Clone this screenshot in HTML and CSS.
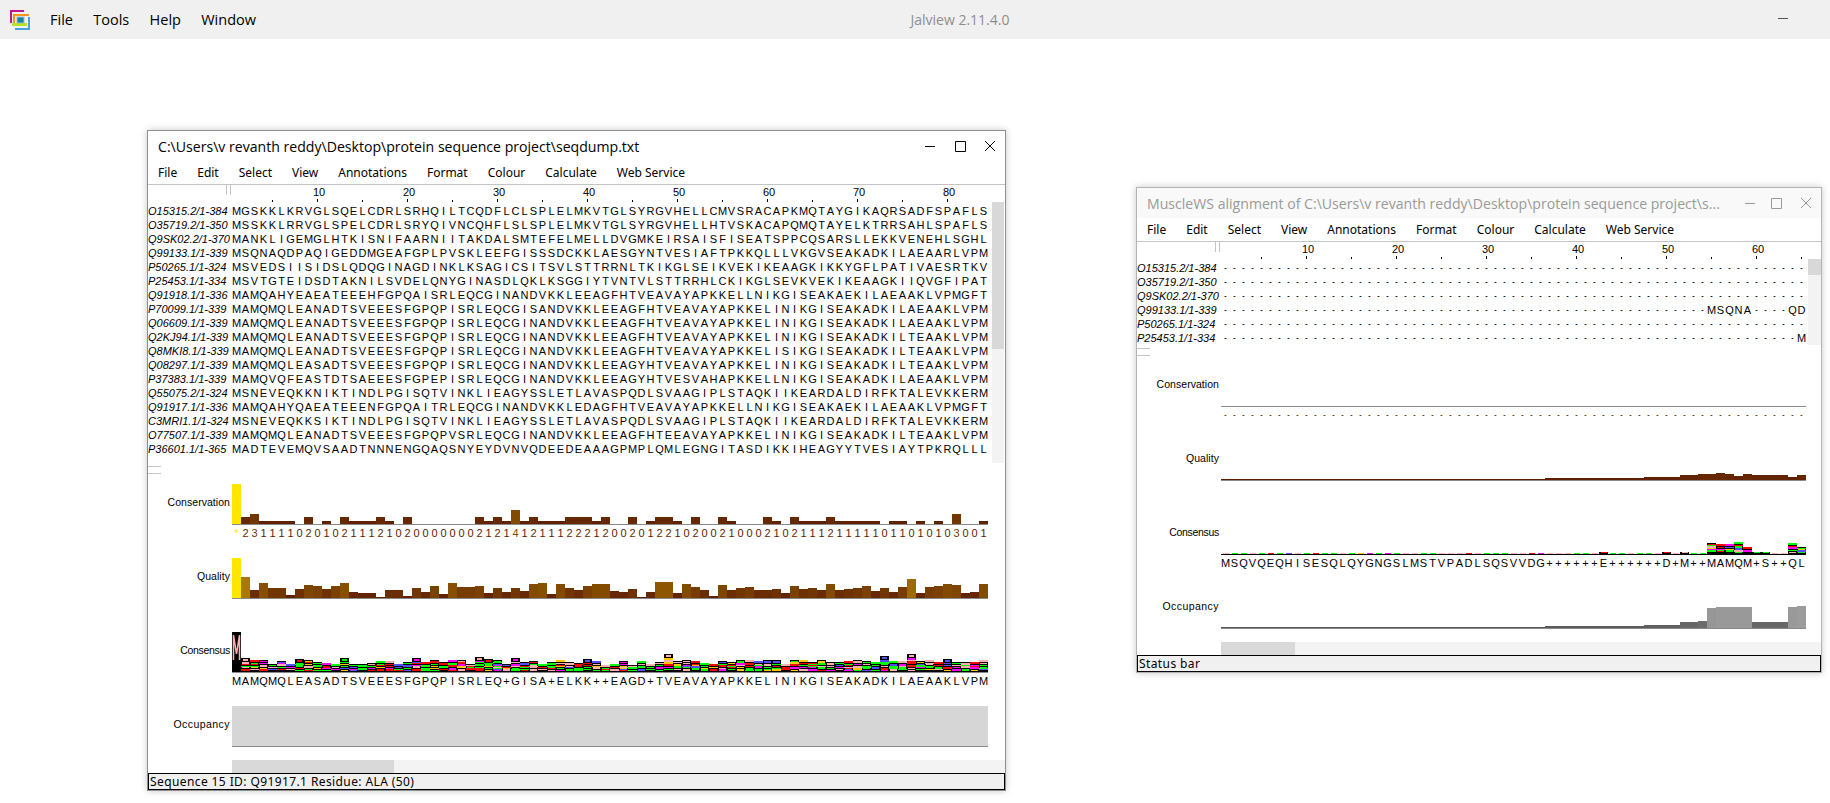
FILE: index.html
```html
<!DOCTYPE html>
<html lang="en">
<head>
<meta charset="utf-8">
<title>Jalview 2.11.4.0</title>
<link rel="stylesheet" href="styles.css">
</head>
<body>
<header class="appbar">
  <svg class="app-logo" width="20" height="20" viewBox="10 9 20 20" aria-hidden="true">
    <rect x="10" y="9" width="14" height="2" fill="#c2168f"/>
    <rect x="10" y="9" width="2" height="13" fill="#c2168f"/>
    <rect x="13" y="13" width="16" height="2" fill="#f7941d"/>
    <rect x="13" y="13" width="2" height="10" fill="#f7941d"/>
    <rect x="12" y="22" width="15" height="3" fill="#b5e61d"/>
    <rect x="28" y="16" width="2" height="13" fill="#4ba3d3"/>
    <rect x="15" y="27" width="15" height="2" fill="#4ba3d3"/>
    <rect x="17" y="16" width="7" height="6" fill="#0f8aa6" stroke="#a9b7bd"/>
  </svg>
  <nav class="app-menu"><span>File</span><span>Tools</span><span>Help</span><span>Window</span></nav>
  <div class="app-title">Jalview 2.11.4.0</div>
  <svg class="app-min" width="10" height="1" aria-hidden="true"><rect width="10" height="1" fill="#555"/></svg>
</header>

<section class="win win-main" id="w1">
  <div class="titlebar">
    <div class="wintitle">C:\Users\v revanth reddy\Desktop\protein sequence project\seqdump.txt</div>
    <svg class="controls" width="70" height="12" viewBox="0 0 70 12" aria-hidden="true">
      <path d="M0 6.500H10M30.500 1.500H40.500V11.500H30.500ZM60 1L70 11M70 1L60 11" fill="none" stroke="currentColor"/>
    </svg>
  </div>
  <nav class="menubar"><span>File</span><span>Edit</span><span>Select</span><span>View</span><span>Annotations</span><span>Format</span><span>Colour</span><span>Calculate</span><span>Web Service</span></nav>
  <div class="ruler-row"><div class="side"><i class="grip"></i></div><div class="ruler"></div></div>
  <div class="seqpanel">
    <div class="rows"></div>
    <div class="vscroll"><div class="vthumb"></div></div>
  </div>
  <div class="sash"></div>
  <div class="annots"></div>
  <div class="hscroll-row"><div class="hscroll"><div class="hthumb"></div></div></div>
  <div class="status">Sequence 15 ID: Q91917.1 Residue: ALA (50)</div>
</section>

<section class="win win-muscle" id="w2">
  <div class="titlebar">
    <div class="wintitle">MuscleWS alignment of C:\Users\v revanth reddy\Desktop\protein sequence project\s...</div>
    <svg class="controls" width="70" height="12" viewBox="0 0 70 12" aria-hidden="true">
      <path d="M4 6.500H14M30.500 1.500H40.500V11.500H30.500ZM60 1L70 11M70 1L60 11" fill="none" stroke="currentColor"/>
    </svg>
  </div>
  <nav class="menubar"><span>File</span><span>Edit</span><span>Select</span><span>View</span><span>Annotations</span><span>Format</span><span>Colour</span><span>Calculate</span><span>Web Service</span></nav>
  <div class="ruler-row"><div class="side"><i class="grip"></i></div><div class="ruler"></div></div>
  <div class="seqpanel">
    <div class="rows"></div>
    <div class="vscroll"><div class="vthumb"></div></div>
  </div>
  <div class="sash"></div>
  <div class="annots"></div>
  <div class="hscroll-row"><div class="hscroll"><div class="hthumb"></div></div></div>
  <div class="status">Status bar</div>
</section>
<script src="script.js"></script>
</body>
</html>
```
FILE: styles.css
```css
* { box-sizing: border-box; }
html, body { margin: 0; height: 100%; overflow: hidden; background: #fff; }
body { font-family: "Noto Sans", "Liberation Sans", sans-serif; color: #000; }

.appbar { height: 39px; background: #f0f0f0; display: flex; align-items: center; padding-left: 10px; position: relative; }
.app-logo { display: block; }
.app-menu { display: flex; gap: 20.3px; margin-left: 20px; font-family: "Open Sans", sans-serif; font-size: 14.5px; }
.app-title { position: absolute; left: 90px; right: 0; text-align: center; font-family: "Open Sans", sans-serif; font-size: 14px; color: #8e8e8e; }
.app-min { position: absolute; left: 1778px; top: 18px; }

.win { position: absolute; display: flex; flex-direction: column; background: #fff; border: 1px solid #8f8f8f; box-shadow: 0 0 7px rgba(0, 0, 0, .22); }
.win-main { left: 147px; top: 130px; width: 859px; height: 661px; }
.win-muscle { left: 1136px; top: 187px; width: 686px; height: 486px; border-color: #b4b4b4; }

.titlebar { height: 30px; flex: none; display: flex; align-items: center; justify-content: space-between; padding: 0 10px; }
.wintitle { font-family: "Open Sans", sans-serif; font-size: 14.1px; white-space: nowrap; }
.win-muscle .titlebar { background: #f9f9f9; color: #9a9a9a; }
.controls { flex: none; display: block; }

.menubar { height: 24px; flex: none; display: flex; gap: 20px; align-items: center; padding: 0 10px; border-bottom: 1px solid #c4c4c4; font-size: 12px; }

.ruler-row { height: 17px; flex: none; display: flex; }
.side { width: 84px; flex: none; position: relative; }
.grip { position: absolute; left: 78px; top: 0; width: 5px; height: 10px; border: solid #c4c4c4; border-width: 0 1px; }
.ruler { display: flex; font: 11px "Liberation Sans", sans-serif; }
.tick { width: 9px; height: 17px; display: flex; flex-direction: column; align-items: center; justify-content: flex-end; }
.tick b { font-weight: 400; line-height: 12px; white-space: nowrap; margin: 0 0 1px 3px; }
.tick i { width: 1px; height: 2px; background: #000; }
.tick.major i { height: 3px; }

.seqpanel { flex: none; display: flex; }
.win-main .seqpanel { height: 261px; }
.win-muscle .seqpanel { height: 86px; }
.rows { padding-top: 2px; flex: none; }
.row { display: flex; height: 14px; }
.name { width: 84px; flex: none; font: italic 11px/14px "Liberation Sans", sans-serif; white-space: nowrap; overflow: hidden; }
.cell { width: 9px; flex: none; text-align: center; font: 11px/14px "Liberation Sans", sans-serif; }
.cell.gap { font-size: 7px; font-weight: 700; }

.vscroll { background: #f3f3f3; flex: none; }
.win-main .vscroll { width: 12px; margin-left: 4px; }
.win-muscle .vscroll { width: 13px; margin-left: 2px; }
.vthumb { background: #d8d8d8; }
.win-main .vthumb { height: 147px; }
.win-muscle .vthumb { height: 16px; }

.sash { height: 8px; flex: none; position: relative; }
.sash::before { content: ""; position: absolute; left: 0; top: 3px; width: 13px; height: 6px; border: solid #c4c4c4; border-width: 1px 0; }

.annots { padding-top: 13px; flex: none; }
.annot { display: flex; height: 74px; }
.annot:last-child { height: 54px; }
.label { width: 84px; flex: none; height: 36px; display: flex; align-items: center; justify-content: flex-end; padding-right: 2px; font: 10.5px "Liberation Sans", sans-serif; letter-spacing: .05px; }
.label-consensus { letter-spacing: -.3px; }
.label-occupancy { letter-spacing: .45px; }
.chart { flex: none; }
.graph { height: 41px; display: flex; align-items: flex-end; border-bottom: 1px solid #8a8a8a; }
.graph.filled { background: #d6d6d6; }
.graph i { display: block; width: 9px; flex: none; }
.logo { display: block; }
.letters { display: flex; margin-top: 1px; }

.hscroll-row { flex: none; height: 13px; padding-left: 84px; }
.hscroll { height: 13px; background: #f3f3f3; }
.hthumb { height: 13px; background: #d9d9d9; }
.win-main .hthumb { width: 162px; }
.win-muscle .hthumb { width: 74px; }

.status { flex: none; height: 17px; border: 1px solid #000; background: #f0f0f0; font-size: 12px; line-height: 15px; padding-left: 1px; letter-spacing: .4px; white-space: nowrap; }
```
FILE: script.js
```js
(function () {
  var PINK = '#ffafaf', GREEN = '#00ff00', RED = '#ff0000', BLUE = '#5050ff', MAG = '#ff00ff', ORANGE = '#ffc800', YEL = '#ffff00';
  var COL = { M: PINK, V: PINK, I: PINK, L: PINK, A: PINK, P: PINK, F: PINK, W: PINK, S: GREEN, T: GREEN, Q: GREEN, N: GREEN, D: RED, E: RED, K: BLUE, R: BLUE, H: BLUE, G: MAG, Y: ORANGE, C: YEL };

  var seqs = [
    ['O15315.2/1-384', 'MGSKKLKRVGLSQELCDRLSRHQILTCQDFLCLSPLELMKVTGLSYRGVHELLCMVSRACAPKMQTAYGIKAQRSADFSPAFLS'],
    ['O35719.2/1-350', 'MSSKKLRRVGLSPELCDRLSRYQIVNCQHFLSLSPLELMKVTGLSYRGVHELLHTVSKACAPQMQTAYELKTRRSAHLSPAFLS'],
    ['Q9SK02.2/1-370', 'MANKLIGEMGLHTKISNIFAARNIITAKDALSMTEFELMELLDVGMKEIRSAISFISEATSPPCQSARSLLEKKVENEHLSGHL'],
    ['Q99133.1/1-339', 'MSQNAQDPAQIGEDDMGEAFGPLPVSKLEEFGISSSDCKKLAESGYNTVESIAFTPKKQLLLVKGVSEAKADKILAEAARLVPM'],
    ['P50265.1/1-324', 'MSVEDSIISIDSLQDQGINAGDINKLKSAGICSITSVLSTTRRNLTKIKGLSEIKVEKIKEAAGKIKKYGFLPATIVAESRTKV'],
    ['P25453.1/1-334', 'MSVTGTEIDSDTAKNILSVDELQNYGINASDLQKLKSGGIYTVNTVLSTTRRHLCKIKGLSEVKVEKIKEAAGKIIQVGFIPAT'],
    ['Q91918.1/1-336', 'MAMQAHYEAEATEEEHFGPQAISRLEQCGINANDVKKLEEAGFHTVEAVAYAPKKELLNIKGISEAKAEKILAEAAKLVPMGFT'],
    ['P70099.1/1-339', 'MAMQMQLEANADTSVEEESFGPQPISRLEQCGISANDVKKLEEAGFHTVEAVAYAPKKELINIKGISEAKADKILAEAAKLVPM'],
    ['Q06609.1/1-339', 'MAMQMQLEANADTSVEEESFGPQPISRLEQCGINANDVKKLEEAGFHTVEAVAYAPKKELINIKGISEAKADKILAEAAKLVPM'],
    ['Q2KJ94.1/1-339', 'MAMQMQLEANADTSVEEESFGPQPISRLEQCGINANDVKKLEEAGFHTVEAVAYAPKKELINIKGISEAKADKILTEAAKLVPM'],
    ['Q8MKI8.1/1-339', 'MAMQMQLEANADTSVEEESFGPQPISRLEQCGINANDVKKLEEAGFHTVEAVAYAPKKELISIKGISEAKADKILTEAAKLVPM'],
    ['Q08297.1/1-339', 'MAMQMQLEASADTSVEEESFGPQPISRLEQCGINANDVKKLEEAGYHTVEAVAYAPKKELINIKGISEAKADKILTEAAKLVPM'],
    ['P37383.1/1-339', 'MAMQVQFEASTDTSAEEESFGPEPISRLEQCGINANDVKKLEEAGYHTVESVAHAPKKELLNIKGISEAKADKILAEAAKLVPM'],
    ['Q55075.2/1-324', 'MSNEVEQKKNIKTINDLPGISQTVINKLIEAGYSSLETLAVASPQDLSVAAGIPLSTAQKIIKEARDALDIRFKTALEVKKERM'],
    ['Q91917.1/1-336', 'MAMQAHYQAEATEEENFGPQAITRLEQCGINANDVKKLEDAGFHTVEAVAYAPKKELLNIKGISEAKAEKILAEAAKLVPMGFT'],
    ['C3MRI1.1/1-324', 'MSNEVEQKKSIKTINDLPGISQTVINKLIEAGYSSLETLAVASPQDLSVAAGIPLSTAQKIIKEARDALDIRFKTALEVKKERM'],
    ['O77507.1/1-339', 'MAMQMQLEANADTSVEEESFGPQPVSRLEQCGINANDVKKLEEAGFHTEEAVAYAPKKELINIKGISEAKADKILTEAAKLVPM'],
    ['P36601.1/1-365', 'MADTEVEMQVSAADTNNNENGQAQSNYEYDVNVQDEEDEAAAGPMPLQMLEGNGITASDIKKIHEAGYYTVESIAYTPKRQLLL']
  ];
  var dash = function (n) { return new Array(n + 1).join('-'); };
  var seqs2 = [
    ['O15315.2/1-384', dash(65)],
    ['O35719.2/1-350', dash(65)],
    ['Q9SK02.2/1-370', dash(65)],
    ['Q99133.1/1-339', dash(54) + 'MSQNA----QD'],
    ['P50265.1/1-324', dash(65)],
    ['P25453.1/1-334', dash(64) + 'M']
  ];

  var consDigits = '*23111102010211121020000000212141211122212002012210200210002102111211111011010103001';
  var qual = [40,21,8,15,10,10,3,9,13,12,9,12,15,6,5,5,1,8,8,2,10,6,12,4,15,11,11,12,5,10,6,10,7,14,15,4,14,10,8,12,14,14,7,6,9,1,6,16,16,5,14,11,8,2,13,8,10,11,8,8,9,5,12,9,10,8,14,8,9,10,12,7,10,6,11,19,5,11,12,14,13,5,6,14];
  var logoH = [40,14,12,12,8,11,8,13,12,10,9,8,14,8,8,9,11,11,8,10,14,10,12,10,12,12,8,15,13,12,8,14,10,11,8,10,12,10,9,13,11,7,8,11,7,11,8,10,18,11,12,11,9,8,11,10,12,12,11,12,12,8,12,12,10,12,10,10,11,12,11,10,16,11,11,18,11,12,10,13,10,10,10,12];
  var consLetters = 'MAMQMQLEASADTSVEEESFGPQPISRLEQ+GISA+ELKK++EAGD+TVEAVAYAPKKELINIKGISEAKADKILAEAAKLVPM';
  var consLetters2 = 'MSQVQEQHISESQLQYGNGSLMSTVPADLSQSVVDG++++++E++++++D+M++MAMQM+S++QL';

  function fill(n, f) { var a = []; for (var i = 0; i < n; i++) a.push(f(i + 1)); return a; }
  var qual2 = fill(65, function (c) {
    if (c <= 36) return 1; if (c <= 47) return 2; if (c <= 51) return 3; if (c <= 53) return 5; if (c <= 55) return 6;
    return { 56: 7, 57: 6, 58: 4, 59: 6, 60: 5, 61: 5, 62: 5, 63: 5, 64: 3, 65: 5 }[c];
  });
  var occ2 = fill(65, function (c) {
    if (c <= 36) return 1; if (c <= 47) return 2; if (c <= 51) return 3; if (c <= 53) return 6; if (c === 54) return 7;
    return { 55: 20, 56: 21, 57: 21, 58: 21, 59: 21, 60: 6, 61: 6, 62: 6, 63: 6, 64: 21, 65: 22 }[c];
  });
  var logoH2 = fill(65, function (c) {
    return { 43: 2, 50: 2, 52: 2, 55: 11, 56: 10, 57: 10, 58: 12, 59: 7, 60: 2, 61: 2, 64: 11, 65: 7 }[c] || 1;
  });

  function el(tag, cls, text) {
    var e = document.createElement(tag);
    if (cls) e.className = cls;
    if (text !== undefined) e.textContent = text;
    return e;
  }
  function cellsInto(parent, str, color) {
    for (var i = 0; i < str.length; i++) {
      var c = el('span', str[i] === '-' ? 'cell gap' : 'cell', str[i]);
      if (color) c.style.color = color(i);
      parent.appendChild(c);
    }
  }
  function lerp(a, b, t) {
    return 'rgb(' + [0, 1, 2].map(function (i) { return Math.round(a[i] + (b[i] - a[i]) * t); }).join(',') + ')';
  }
  var RAMP = [[0, [92, 28, 0]], [7, [102, 40, 0]], [15, [134, 80, 0]], [21, [168, 122, 0]], [40, [255, 230, 0]]];
  function quality(h) {
    for (var i = 1; i < RAMP.length; i++) {
      if (h <= RAMP[i][0]) return lerp(RAMP[i - 1][1], RAMP[i][1], (h - RAMP[i - 1][0]) / (RAMP[i][0] - RAMP[i - 1][0]));
    }
    return 'rgb(255,230,0)';
  }
  function occupancy(h) { return lerp([85, 85, 85], [214, 214, 214], h / 40); }

  function ruler(root, cols) {
    var r = root.querySelector('.ruler');
    for (var i = 1; i <= cols; i++) {
      var t = el('div', 'tick' + (i % 10 === 0 ? ' major' : ''));
      if (i % 10 === 0) t.appendChild(el('b', '', String(i)));
      if (i % 5 === 0) t.appendChild(el('i'));
      r.appendChild(t);
    }
  }
  function rows(root, data) {
    var r = root.querySelector('.rows');
    data.forEach(function (d) {
      var row = el('div', 'row');
      row.appendChild(el('div', 'name', d[0]));
      cellsInto(row, d[1]);
      r.appendChild(row);
    });
  }
  function bars(values, colour, filled) {
    var g = el('div', 'graph' + (filled ? ' filled' : ''));
    values.forEach(function (h) {
      var b = el('i');
      b.style.height = h + 'px';
      b.style.background = colour(h);
      g.appendChild(b);
    });
    return g;
  }

  var NS = 'http://www.w3.org/2000/svg';
  function rect(svg, x, y, w, h, fill) {
    var r = document.createElementNS(NS, 'rect');
    r.setAttribute('x', x); r.setAttribute('y', y); r.setAttribute('width', w); r.setAttribute('height', h); r.setAttribute('fill', fill);
    svg.appendChild(r);
  }
  function logo(heights, letters, seed, lineColour) {
    var cols = heights.length;
    var svg = document.createElementNS(NS, 'svg');
    svg.setAttribute('class', 'logo');
    svg.setAttribute('width', cols * 9); svg.setAttribute('height', 41);
    svg.setAttribute('shape-rendering', 'crispEdges');
    var s = seed;
    function rnd() { s = (s * 1664525 + 1013904223) % 4294967296; return s / 4294967296; }
    var palette = [GREEN, GREEN, GREEN, RED, RED, PINK, PINK, MAG, BLUE, ORANGE];
    rect(svg, 0, 40, cols * 9, 1, lineColour);
    heights.forEach(function (h, i) {
      var x = i * 9, L = letters[i], base = COL[L] || (rnd() < .5 ? GREEN : PINK);
      if (h <= 2) {
        if (h === 2) rect(svg, x, 38, 9, 2, '#000');
        rect(svg, x + 2, 39 - (h === 2 ? 1 : 0), 6, 1, base);
        return;
      }
      rect(svg, x, 40 - h, 9, h, '#000');
      if (h >= 30) {
        var p = document.createElementNS(NS, 'polyline');
        p.setAttribute('points', '1.500,28 1.500,3 4.500,22 7.500,3 7.500,28');
        p.setAttribute('fill', 'none'); p.setAttribute('stroke', PINK); p.setAttribute('stroke-width', '1.500');
        p.setAttribute('shape-rendering', 'auto');
        svg.appendChild(p);
        return;
      }
      var y = 40 - h;
      if (h >= 13) { rect(svg, x + 2, y + 1, 5, 2, base); y += 4; } else if (rnd() < .5) { rect(svg, x, y, 9, 2, palette[Math.floor(rnd() * palette.length)]); y += 3; } else { y += 1; }
      while (y < 39) {
        var t = rnd() < .3 ? 2 : 1;
        if (y + t > 39) t = 39 - y;
        var ins = rnd() < .5 ? 1 : 0;
        rect(svg, x + ins, y, 9 - ins * 2, t, palette[Math.floor(rnd() * palette.length)]);
        y += t + (rnd() < .55 ? 1 : 0);
      }
    });
    return svg;
  }

  function annot(root, label, body, letters) {
    var a = el('div', 'annot');
    a.appendChild(el('div', 'label label-' + label.toLowerCase(), label));
    var c = el('div', 'chart');
    c.appendChild(body);
    if (letters) c.appendChild(letters);
    a.appendChild(c);
    root.querySelector('.annots').appendChild(a);
  }
  function lettersRow(str, colour) {
    var r = el('div', 'letters');
    cellsInto(r, str, colour);
    return r;
  }

  var w1 = document.getElementById('w1');
  ruler(w1, 84);
  rows(w1, seqs);
  var H = { '*': 40, 0: 0, 1: 3, 2: 7, 3: 10, 4: 14 };
  var consH = consDigits.split('').map(function (d) { return H[d]; });
  annot(w1, 'Conservation', bars(consH, quality), lettersRow(consDigits, function (i) { return quality(consH[i]); }));
  annot(w1, 'Quality', bars(qual, quality));
  annot(w1, 'Consensus', logo(logoH, consLetters, 12345, '#8a8a8a'), lettersRow(consLetters));
  annot(w1, 'Occupancy', bars(new Array(84).fill(40), function () { return '#d6d6d6'; }));

  var w2 = document.getElementById('w2');
  ruler(w2, 65);
  rows(w2, seqs2);
  annot(w2, 'Conservation', bars(new Array(65).fill(0), quality), lettersRow(dash(65), function () { return '#5f2200'; }));
  annot(w2, 'Quality', bars(qual2, quality));
  annot(w2, 'Consensus', logo(logoH2, consLetters2, 777, '#000'), lettersRow(consLetters2));
  annot(w2, 'Occupancy', bars(occ2, occupancy));
})();
```
